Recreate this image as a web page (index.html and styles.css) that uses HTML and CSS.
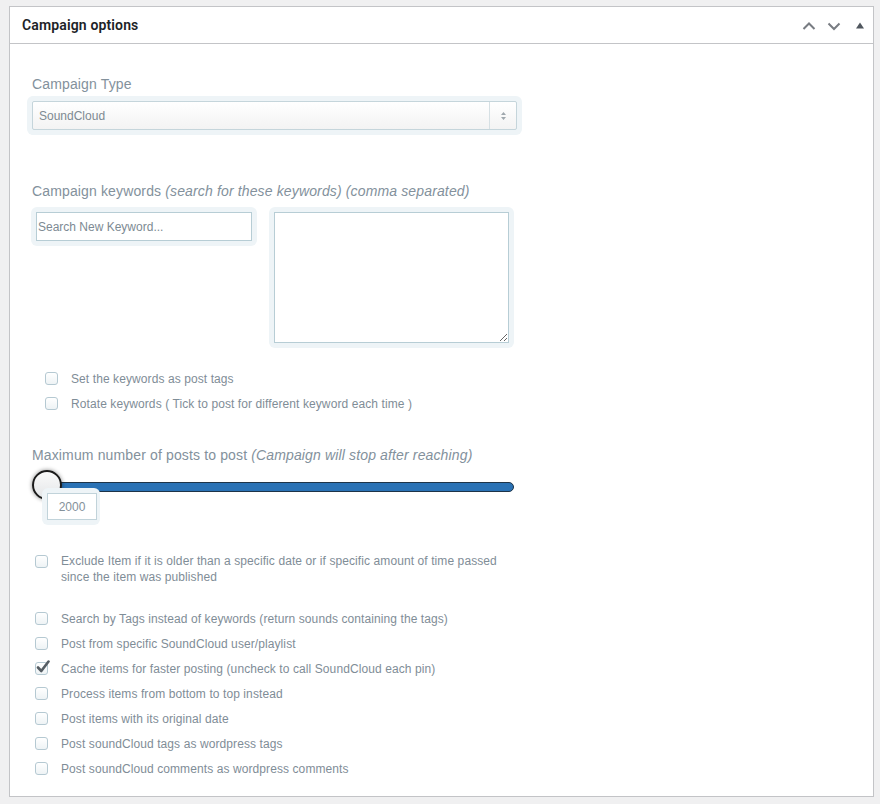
FILE: index.html
```html
<!DOCTYPE html>
<html>
<head>
<meta charset="utf-8">
<link rel="stylesheet" href="styles.css">
</head>
<body>
<div class="postbox">
  <div class="postbox-header">
    <h2 class="title">Campaign options</h2>
    <div class="handles">
      <svg class="h-icon" width="16" height="16" viewBox="0 0 16 16"><path d="M2.5 11 L8 5.5 L13.5 11" fill="none" stroke="#787c82" stroke-width="2"/></svg>
      <svg class="h-icon" width="16" height="16" viewBox="0 0 16 16"><path d="M2.5 5.5 L8 11 L13.5 5.5" fill="none" stroke="#787c82" stroke-width="2"/></svg>
      <svg class="h-icon tri" width="10" height="16" viewBox="0 0 10 16"><path d="M1 10.5 L5 4.5 L9 10.5 Z" fill="#50575e"/></svg>
    </div>
  </div>
  <div class="inside">
    <p class="field-label type-label">Campaign Type</p>
    <div class="halo select-halo">
      <div class="select">
        <span class="select-text">SoundCloud</span>
        <span class="select-arrows">
          <svg width="7" height="10" viewBox="0 0 7 10"><path d="M1 4 L3.5 1 L6 4 Z M1 6 L3.5 9 L6 6 Z" fill="#a0a8ae"/></svg>
        </span>
      </div>
    </div>

    <p class="field-label kw-label">Campaign keywords <em>(search for these keywords) (comma separated)</em></p>
    <div class="kw-row">
      <div class="halo search-halo">
        <input class="search-input" type="text" placeholder="Search New Keyword...">
      </div>
      <div class="halo ta-halo">
        <textarea class="kw-textarea"></textarea>
      </div>
    </div>

    <div class="kw-opts">
      <div class="row"><span class="cb"></span><span class="row-text">Set the keywords as post tags</span></div>
      <div class="row"><span class="cb"></span><span class="row-text">Rotate keywords ( Tick to post for different keyword each time )</span></div>
    </div>

    <p class="field-label max-label">Maximum number of posts to post <em>(Campaign will stop after reaching)</em></p>
    <div class="slider-block">
      <div class="slider-track">
        <span class="slider-thumb"></span>
        <div class="slider-tip halo"><span class="tip-box">2000</span></div>
      </div>
    </div>

    <div class="exclude-row">
      <span class="cb"></span>
      <span class="exclude-text">Exclude Item if it is older than a specific date or if specific amount of time passed since the item was published</span>
    </div>

    <div class="opt-list">
      <div class="row"><span class="cb"></span><span class="row-text">Search by Tags instead of keywords (return sounds containing the tags)</span></div>
      <div class="row"><span class="cb"></span><span class="row-text">Post from specific SoundCloud user/playlist</span></div>
      <div class="row"><span class="cb checked"><svg class="check" width="16" height="16" viewBox="0 0 16 16"><path d="M3 7.5 L6.3 11 L13.5 1.5" fill="none" stroke="#555d63" stroke-width="2.6" stroke-linecap="round" stroke-linejoin="round"/></svg></span><span class="row-text">Cache items for faster posting (uncheck to call SoundCloud each pin)</span></div>
      <div class="row"><span class="cb"></span><span class="row-text">Process items from bottom to top instead</span></div>
      <div class="row"><span class="cb"></span><span class="row-text">Post items with its original date</span></div>
      <div class="row"><span class="cb"></span><span class="row-text">Post soundCloud tags as wordpress tags</span></div>
      <div class="row"><span class="cb"></span><span class="row-text">Post soundCloud comments as wordpress comments</span></div>
    </div>
  </div>
</div>
</body>
</html>
```
FILE: styles.css
```css
html, body {
  margin: 0;
  padding: 0;
  background: #f0f0f1;
}
body {
  padding: 6px 0 0 9px;
  font-family: "Liberation Sans", Arial, sans-serif;
}
.postbox {
  box-sizing: border-box;
  width: 865px;
  height: 791px;
  background: #fff;
  border: 1px solid #c3c4c7;
}
.postbox-header {
  height: 36px;
  border-bottom: 1px solid #c3c4c7;
  display: flex;
  align-items: center;
  justify-content: space-between;
  padding: 0 8px 0 12px;
}
.title {
  margin: 0;
  font-family: Roboto, "Liberation Sans", sans-serif;
  font-size: 14px;
  font-weight: 600;
  color: #1d2327;
  letter-spacing: 0.01em;
}
.handles {
  display: flex;
  align-items: center;
  gap: 9px;
  padding-top: 1px;
}
.h-icon { display: block; }
.tri { margin-left: 4px; }

.inside {
  padding: 32px 0 0 22px;
}
.field-label {
  margin: 0;
  font-size: 14px;
  line-height: 17px;
  color: #83919c;
  letter-spacing: 0.14px;
}
.field-label em { font-style: italic; }

.halo {
  background: #eef4f7;
  border-radius: 6px;
  padding: 5px;
  box-sizing: border-box;
}
.select-halo {
  width: 495px;
  margin: 3px 0 0 -5px;
}
.select {
  height: 29px;
  box-sizing: border-box;
  border: 1px solid #c5d5db;
  border-radius: 2px;
  background: linear-gradient(#ffffff, #f3f3f3);
  display: flex;
  align-items: center;
}
.select-text {
  flex: 1;
  padding-left: 6px;
  font-size: 12px;
  color: #7e8a92;
}
.select-arrows {
  width: 26px;
  height: 100%;
  border-left: 1px solid #d6e0e4;
  display: flex;
  align-items: center;
  justify-content: center;
}

.kw-label { margin-top: 48px; }
.kw-row {
  display: flex;
  align-items: flex-start;
  gap: 12px;
  margin: 7px 0 0 -1px;
}
.search-halo { width: 226px; }
.search-input {
  display: block;
  box-sizing: border-box;
  width: 216px;
  height: 29px;
  margin: 0;
  padding: 0 0 0 1px;
  border: 1px solid #b7cdd5;
  border-radius: 0;
  background: #fff;
  font-family: "Liberation Sans", Arial, sans-serif;
  font-size: 12px;
  outline: none;
}
.search-input::placeholder { color: #7d8a93; }
.ta-halo { width: 245px; }
.kw-textarea {
  display: block;
  box-sizing: border-box;
  width: 235px;
  height: 131px;
  margin: 0;
  border: 1px solid #b7cdd5;
  border-radius: 0;
  background: #fff;
  resize: vertical;
  outline: none;
}

.row {
  height: 25px;
  display: flex;
  align-items: center;
  gap: 13px;
}
.cb {
  position: relative;
  flex: none;
  width: 13px;
  height: 13px;
  box-sizing: border-box;
  border: 1px solid #b5c9d2;
  border-radius: 3px;
  background: linear-gradient(#ffffff, #eef3f5);
}
.check {
  position: absolute;
  left: -1px;
  top: -3px;
}
.row-text {
  font-size: 12px;
  color: #7f8d97;
  white-space: nowrap;
  letter-spacing: 0.09px;
}
.kw-opts {
  margin-top: 18px;
  padding-left: 13px;
}

.max-label { margin-top: 31px; }
.slider-block {
  height: 43px;
  margin-top: 18px;
  padding-left: 1px;
}
.slider-track {
  position: relative;
  width: 481px;
  height: 10px;
  box-sizing: border-box;
  background: #2a72b5;
  border: 1px solid #1e3448;
  border-radius: 5px;
}
.slider-thumb {
  position: absolute;
  left: -2px;
  top: -13px;
  width: 30px;
  height: 30px;
  box-sizing: border-box;
  border-radius: 50%;
  border: 2px solid #1b1b1b;
  background: linear-gradient(#fafafa, #e4e6e8);
  box-shadow: 0 0 4px rgba(0, 0, 0, 0.45);
}
.slider-tip {
  position: absolute;
  left: 8px;
  top: 5px;
  width: 58px;
  height: 37px;
}
.tip-box {
  display: flex;
  align-items: center;
  justify-content: center;
  width: 50px;
  height: 27px;
  box-sizing: border-box;
  border: 1px solid #c1d3da;
  background: #fff;
  font-size: 12px;
  color: #84919a;
}

.exclude-row {
  display: flex;
  align-items: flex-start;
  gap: 13px;
  margin-top: 28px;
  padding-left: 3px;
}
.exclude-row .cb { margin-top: 2px; }
.exclude-text {
  width: 440px;
  font-size: 12px;
  line-height: 16px;
  color: #7f8d97;
  letter-spacing: 0.09px;
}
.opt-list {
  margin-top: 21px;
  padding-left: 3px;
}
```
